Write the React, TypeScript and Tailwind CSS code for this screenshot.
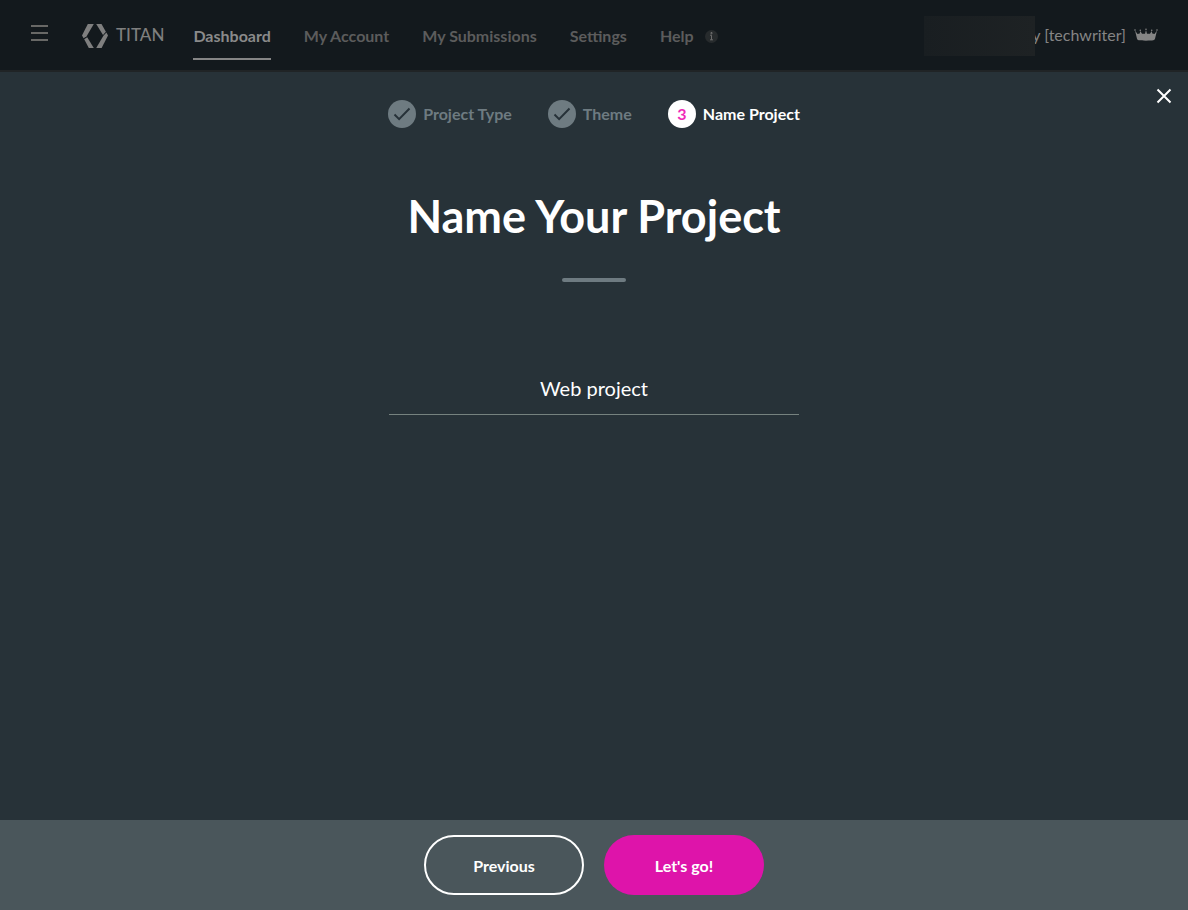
import React, { useState } from 'react';

const CheckIcon: React.FC = () => (
  <svg viewBox="0 0 28 28" className="w-7 h-7" fill="none" stroke="#263138" strokeWidth="2" aria-hidden="true">
    <path d="M6.5 14.5l4.6 4.6L21.5 8.5" />
  </svg>
);

const App: React.FC = () => {
  const [projectName, setProjectName] = useState('Web project');

  const links = ['My Account', 'My Submissions', 'Settings'];

  const steps = [
    { name: 'Project Type', done: true },
    { name: 'Theme', done: true },
    { name: 'Name Project', done: false },
  ];

  return (
    <div className="min-h-screen flex flex-col bg-[#273238] text-white font-['Lato',sans-serif]">
      <header className="h-[72px] flex items-center justify-between bg-[#13191d] border-b-2 border-[#202426] pt-0.5 pl-[31px] pr-[30px]">
        <div className="flex items-center">
          <button type="button" aria-label="Open menu" className="flex flex-col gap-[5px] mb-1.5">
            <span className="block w-[17px] h-0.5 bg-[#686866]"></span>
            <span className="block w-[17px] h-0.5 bg-[#686866]"></span>
            <span className="block w-[17px] h-0.5 bg-[#686866]"></span>
          </button>

          <a href="#" className="flex items-center gap-2 ml-[34px] text-[#7f7f7f]">
            <svg viewBox="0 0 26 24" className="w-[26px] h-6" fill="currentColor" aria-hidden="true">
              <path d="M5.8 0h6L4.6 12.2 1.600 14.300 0 11.500z" />
              <path d="M2.200 15.300L5.200 13.200 11.800 24H6.800z" />
              <path d="M14.200 0h5.300l4.400 7.700-2.900 3.200z" />
              <path d="M24.400 8.600L26 11.500 19.600 24h-5.400l7.200-12.200z" />
            </svg>
            <span className="text-[17px] leading-5 font-medium mb-0.5">TITAN</span>
          </a>

          <nav className="flex items-center gap-[33px] ml-[29px] text-base leading-6 font-bold text-[#5c5c5c]">
            <a href="#" className="relative text-[#8a8a8a]">
              Dashboard
              <span className="absolute left-0 right-0 -bottom-3 h-0.5 bg-[#858585]"></span>
            </a>
            {links.map((link) => (
              <a key={link} href="#">{link}</a>
            ))}
            <a href="#" className="flex items-center gap-[11px]">
              Help
              <svg viewBox="0 0 13 13" className="w-[13px] h-[13px]" aria-hidden="true">
                <circle cx="6.5" cy="6.5" r="6.5" fill="#272b2d" />
                <path d="M5 5.2h1.5v4.6M5 9.8h3M6 2.5h1v1.3H6z" fill="none" stroke="#6c6c6c" strokeWidth="1" />
              </svg>
            </a>
          </nav>
        </div>

        <div className="flex items-center text-base leading-6 text-[#858585]">
          <span className="relative z-10 w-[111px] h-10 -mr-[3px] bg-linear-to-r from-[#191e21] to-[#1e2224]"></span>
          <span className="mr-2 mb-0.5">y [techwriter]</span>
          <svg viewBox="0 0 24 13" className="w-6 h-[13px] mb-1" fill="currentColor" aria-hidden="true">
            <path d="M1 2.500l2.500 3.500L5.700 5.500 6.300 3l1.700 2.700h3L12 2l1 3.700h3L17.700 3l.6 2.500 2.200.5L23 2.500l-2 8.300c-.3 1.300-1.500 1.900-9 1.900s-8.700-.6-9-1.900z" />
            <circle cx="1" cy="2" r="0.8" />
            <circle cx="6.300" cy="2.200" r="0.8" />
            <circle cx="12" cy="1.200" r="0.8" />
            <circle cx="17.700" cy="2.200" r="0.8" />
            <circle cx="23" cy="2" r="0.8" />
          </svg>
        </div>
      </header>

      <main className="relative flex-1 flex flex-col items-center pt-7">
        <button type="button" aria-label="Close" className="absolute top-4 right-4">
          <svg viewBox="0 0 16 16" className="w-4 h-4" fill="none" stroke="currentColor" strokeWidth="2" aria-hidden="true">
            <path d="M1.500 1.500l13 13M14.500 1.500l-13 13" />
          </svg>
        </button>

        <ol className="flex items-center gap-9 text-base leading-7 font-bold">
          {steps.map((step, i) => (
            <li key={step.name} className={`flex items-center gap-[7px] ${step.done ? 'text-[#6e7b81]' : 'text-white'}`}>
              <span className={`w-7 h-7 rounded-full flex items-center justify-center ${step.done ? 'bg-[#6e7b81]' : 'bg-white text-[#f02cb8]'}`}>
                {step.done ? <CheckIcon /> : i + 1}
              </span>
              {step.name}
            </li>
          ))}
        </ol>

        <h1 className="mt-[60px] text-[45px] leading-[56px] font-bold text-center">Name Your Project</h1>
        <div className="mt-[34px] w-16 h-1 rounded-full bg-[#6e7b81]"></div>

        <input
          type="text"
          aria-label="Project name"
          value={projectName}
          onChange={(e) => setProjectName(e.target.value)}
          className="mt-20 w-full max-w-[410px] h-[53px] bg-transparent border-b border-[#76827f] text-center text-xl outline-none"
        />
      </main>

      <footer className="h-[90px] flex items-center justify-center gap-5 bg-[#4a565b] text-base font-bold">
        <button type="button" className="w-40 h-[60px] pt-0.5 rounded-full border-2 border-white">Previous</button>
        <button type="button" className="w-40 h-[60px] pt-0.5 rounded-full bg-[#de14aa]">Let's go!</button>
      </footer>
    </div>
  );
};

export default App;
